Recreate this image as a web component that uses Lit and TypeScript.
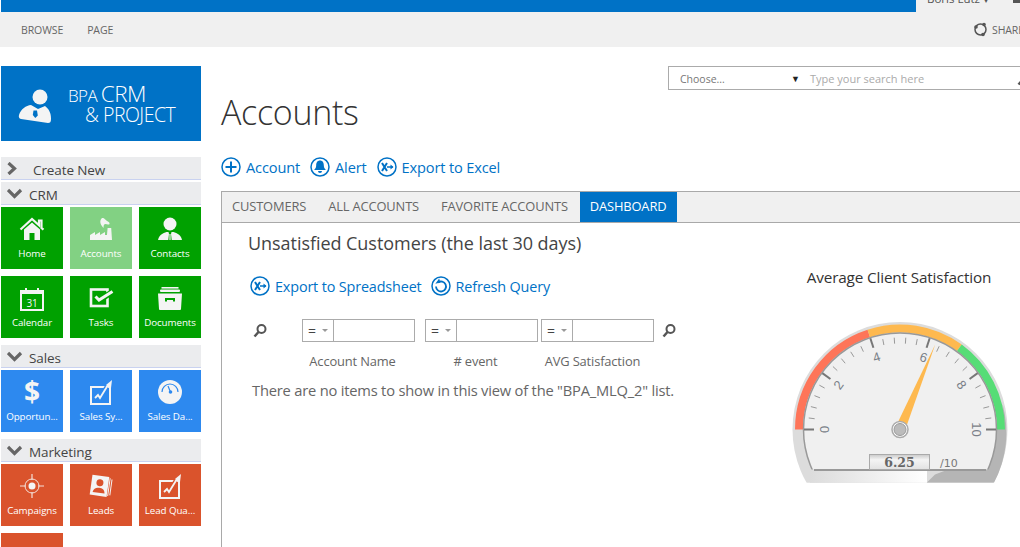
import { LitElement, html, css, svg } from "lit";
import { customElement } from "lit/decorators.js";

const C = (n: number) => {
  const a = Math.PI - (n / 10) * Math.PI;
  return [Math.cos(a), -Math.sin(a)];
};
const CX = 120, CY = 169.5;
const pt = (n: number, r: number) => {
  const [x, y] = C(n);
  return [CX + x * r, CY + y * r];
};
const arc = (a: number, b: number, r: number) => {
  const [x1, y1] = pt(a, r), [x2, y2] = pt(b, r);
  return `M${x1} ${y1}A${r} ${r} 0 0 1 ${x2} ${y2}`;
};

const gauge = () => {
  const ticks: unknown[] = [];
  for (let i = 0; i <= 50; i++) {
    const n = i / 5;
    if (i % 10 === 0) {
      const [a, b] = pt(n, 96), [c, d] = pt(n, 86);
      ticks.push(svg`<line class="major" x1=${a} y1=${b} x2=${c} y2=${d}></line>`);
      const [lx, ly] = pt(n, 76);
      ticks.push(svg`<text class="num" text-anchor="middle" dominant-baseline="central" transform="translate(${lx} ${ly}) rotate(${n * 18 - 90})">${n}</text>`);
    } else if (i % 2 === 0) {
      const [a, b] = pt(n, 92), [c, d] = pt(n, 86);
      ticks.push(svg`<line class="minor" x1=${a} y1=${b} x2=${c} y2=${d}></line>`);
    }
  }
  const [tx, ty] = pt(6.25, 92);
  const dx = tx - CX, dy = ty - CY, len = Math.hypot(dx, dy);
  const px = (-dy / len) * 5, py = (dx / len) * 5;
  return html`<svg class="gauge" width="240" height="230" viewBox="0 0 240 230">
    <defs>
      <clipPath id="body"><rect x="0" y="0" width="240" height="222.7"></rect></clipPath>
      <clipPath id="dial"><rect x="0" y="0" width="240" height="209.5"></rect></clipPath>
      <linearGradient id="strip" x1="0" x2="1" y1="0" y2="0">
        <stop offset="0" stop-color="#dcdcdc"></stop><stop offset="1" stop-color="#ffffff"></stop>
      </linearGradient>
      <linearGradient id="box" x1="0" x2="0" y1="0" y2="1">
        <stop offset="0" stop-color="#c9c9c9"></stop><stop offset=".35" stop-color="#f4f4f4"></stop><stop offset="1" stop-color="#e2e2e2"></stop>
      </linearGradient>
    </defs>
    <g clip-path="url(#body)">
      <circle cx=${CX} cy=${CY} r="107.5" fill="#dcdcdc"></circle>
      <rect x="30" y="205" width="117" height="20" fill="url(#strip)"></rect>
      <path d="M222.7 144.5A107.5 107.5 0 0 1 214 222.7H146.7L155 214.5 L180 205 L222 160Z" fill="#b5b5b5"></path>
    </g>
    <path d=${arc(0, 4, 101)} class="band" stroke="#fe7559"></path>
    <path d=${arc(4, 7, 101)} class="band" stroke="#feb94f"></path>
    <path d=${arc(7, 10, 101)} class="band" stroke="#56dd76"></path>
    <g clip-path="url(#dial)">
      <circle cx=${CX} cy=${CY} r="96.5" fill="#f0f0f0" stroke="#999" stroke-width="1.5"></circle>
    </g>
    <line x1="34" y1="210" x2="206" y2="210" stroke="#999" stroke-width="2"></line>
    ${ticks}
    <polygon points="${tx},${ty} ${CX + px},${CY + py} ${CX - px},${CY - py}" fill="#feb94f"></polygon>
    <circle cx=${CX} cy=${CY} r="8" fill="#fff" stroke="#aaa" stroke-width="1.5"></circle>
    <circle cx=${CX} cy=${CY} r="6" fill="#bbb" stroke="#999"></circle>
    <rect x="89.5" y="194.5" width="60" height="15" fill="url(#box)" stroke="#aaa"></rect>
    <text class="val" x="119.5" y="207" text-anchor="middle">6.25</text>
    <text class="den" x="160" y="207">/10</text>
  </svg>`;
};

const I = (body: unknown) => html`<svg class="ti" width="30" height="30" viewBox="0 0 30 30">${body}</svg>`;

const icons: Record<string, (bg: string) => unknown> = {
  home: () => I(svg`<path d="M7 15.500 15 8.500l8 7V26h-5.500v-7h-5v7H7Z" fill="#f4f4f4"></path><path d="M3.500 15.500 15 5l7 6.300V6.500h2.500V14l2 1.700" fill="none" stroke="#f4f4f4" stroke-width="2.200"></path>`),
  factory: () => I(svg`<path d="M4 26v-5l5-3v3l5-3v3l5-3v3h2l.6-7h3.600l.8 12Z" fill="#f4f4f4"></path><path d="M17.500 14C14 10 13.500 7 15.500 4.500 18 3 19 6 21 7c3 1 3.500 4 1 3.500-3-1-4.500-1-4.500 3.500Z" fill="#f4f4f4"></path>`),
  person: (bg) => I(svg`<circle cx="15" cy="10" r="6.500" fill="#f4f4f4"></circle><path d="M3 26c1-5 5-7 8.500-8h7c3.500 1 7.500 3 8.500 8Z" fill="#f4f4f4"></path><path d="M13.500 18h3l-.5 2 .7 6h-3.400l.7-6Z" fill=${bg}></path><rect x="14.400" y="20" width="1.200" height="6" fill="#f4f4f4"></rect>`),
  cal: () => I(svg`<rect x="4" y="8" width="22" height="19" fill="none" stroke="#f4f4f4" stroke-width="2"></rect><rect x="4" y="8" width="22" height="3" fill="#f4f4f4"></rect><rect x="8" y="5" width="2" height="6" fill="#f4f4f4"></rect><rect x="20" y="5" width="2" height="6" fill="#f4f4f4"></rect><text x="15" y="24" text-anchor="middle" class="cal">31</text>`),
  tasks: (bg) => I(svg`<rect x="5" y="6.500" width="16.500" height="16.500" fill="none" stroke="#f4f4f4" stroke-width="2.600"></rect><path d="M9 13l4 4L26.500 9" fill="none" stroke=${bg} stroke-width="6"></path><path d="M9.500 13.500l3.500 3.500L26.500 8.500" fill="none" stroke="#f4f4f4" stroke-width="3"></path>`),
  docs: (bg) => I(svg`<rect x="6.500" y="4" width="17" height="1.600" fill="#f4f4f4"></rect><rect x="5" y="6.500" width="20" height="2.500" rx="1" fill="#f4f4f4"></rect><path d="M3 10.500h24l-1 15.500a1 1 0 0 1-1 1H5a1 1 0 0 1-1-1Z" fill="#f4f4f4"></path><path d="M10 18.500v-3.500h10v3.500h-2v-1.500h-6v1.500Z" fill=${bg}></path>`),
  dollar: () => I(svg`<text x="15" y="25" text-anchor="middle" class="dollar">$</text>`),
  chart: (bg) => I(svg`<rect x="5" y="10" width="19" height="17" fill="none" stroke="#f4f4f4" stroke-width="2"></rect><path d="M9 21l3-3 2 3 7-11" fill="none" stroke=${bg} stroke-width="5"></path><path d="M9 21l3-3 2 3 8-13" fill="none" stroke="#f4f4f4" stroke-width="1.800"></path><path d="M26 3l-1 8-5-3Z" fill="#f4f4f4"></path>`),
  dial: (bg) => I(svg`<circle cx="15" cy="15" r="12" fill="#f4f4f4"></circle><path d="M7 15a8 8 0 0 1 16 0" fill="none" stroke=${bg} stroke-width="1.200"></path><path d="M13 9l2.500 6" stroke=${bg} stroke-width="1.200"></path><circle cx="15.500" cy="15" r="1.800" fill=${bg}></circle>`),
  target: () => I(svg`<circle cx="15" cy="15" r="7" fill="none" stroke="#f4e0d8" stroke-width="1"></circle><circle cx="15" cy="15" r="3.500" fill="#f4f4f4"></circle><path d="M15 3v6M15 21v6M3 15h6M21 15h6" stroke="#f4e0d8" stroke-width="1.200"></path>`),
  leads: (bg) => I(svg`<g transform="rotate(8 15 15)"><rect x="22.500" y="6" width="1" height="18" fill="#f4f4f4"></rect><rect x="24.500" y="7" width="1" height="16" fill="#f4f4f4"></rect><rect x="5" y="5" width="17" height="20" fill="#f4f4f4"></rect><circle cx="13.500" cy="12" r="3.500" fill=${bg}></circle><path d="M7.500 22c.5-4 3-5 6-5s5.500 1 6 5Z" fill=${bg}></path></g>`),
  ring: () => I(svg`<circle cx="15" cy="21" r="10" fill="none" stroke="#f4f4f4" stroke-width="2"></circle>`),
};

const act = {
  plus: svg`<path d="M10 4.500v11M4.500 10h11" stroke="#0072c6" stroke-width="2"></path>`,
  bell: svg`<path d="M10 3.500c2.800 0 3.800 2.300 3.800 4.800 0 2.500 1.200 3.600 2 4.700H4.200c.8-1.100 2-2.200 2-4.700 0-2.500 1-4.800 3.800-4.800Z M8 14h4a2 2 0 0 1-4 0Z" fill="#0072c6"></path>`,
  excel: svg`<path d="M5 6l5 8M10 6l-5 8" stroke="#0072c6" stroke-width="2"></path><path d="M10 10h6" stroke="#0072c6" stroke-width="1.500"></path><path d="M13.500 7.500l3 2.500-3 2.500" fill="#0072c6"></path>`,
  refresh: svg`<path d="M7 6.500a5 5 0 1 1-2 4" fill="none" stroke="#0072c6" stroke-width="1.800"></path><path d="M4 7h5V3Z" fill="#0072c6" transform="rotate(-15 7 6)"></path>`,
};
const actIcon = (g: unknown) => html`<svg width="20" height="20" viewBox="0 0 20 20"><circle cx="10" cy="10" r="9" fill="none" stroke="#0072c6" stroke-width="1.500"></circle>${g}</svg>`;
const mag = html`<svg class="mg" width="16" height="16" viewBox="0 0 16 16"><circle cx="9.500" cy="6" r="4" fill="none" stroke="#555" stroke-width="2"></circle><path d="M6.500 9 2.500 13.500" stroke="#555" stroke-width="2.500"></path></svg>`;

type Tile = [string, string, boolean?];
const groups: { name: string; color: string; tiles: Tile[] }[] = [
  { name: "CRM", color: "#00a100", tiles: [["Home", "home"], ["Accounts", "factory", true], ["Contacts", "person"], ["Calendar", "cal"], ["Tasks", "tasks"], ["Documents", "docs"]] },
  { name: "Sales", color: "#2d89ef", tiles: [["Opportun...", "dollar"], ["Sales Sy...", "chart"], ["Sales Da...", "dial"]] },
  { name: "Marketing", color: "#da532c", tiles: [["Campaigns", "target"], ["Leads", "leads"], ["Lead Qua...", "chart"], ["", "ring"]] },
];

@customElement("app-root")
export class AppRoot extends LitElement {
  static styles = css`
    :host { display: block; width: 1020px; height: 547px; overflow: hidden; background: #fff; font-family: "Open Sans", "Noto Sans", sans-serif; color: #444; }
    .suite { display: flex; height: 12px; background: #0072c6; overflow: hidden; margin-left: 1px; }
    .me { margin-left: auto; width: 104px; background: #f0f0f0; font-size: 11.500px; line-height: 12px; color: #555; display: flex; padding-left: 11px; box-sizing: border-box; }
    .me span { margin-top: -7px; white-space: nowrap; }
    .me i { width: 7px; height: 3px; background: #555; margin-left: 24px; flex: none; }
    .ribbon { height: 35px; background: #f0f0f0; display: flex; align-items: center; font-size: 10.500px; color: #666; padding: 0 0 0 21px; gap: 24px; white-space: nowrap; overflow: hidden; letter-spacing: -0.1px; }
    .ribbon .share { margin-left: auto; display: flex; align-items: center; gap: 4px; width: 47px; flex: none; }
    .ribbon .share svg { flex: none; }
    .layout { display: flex; padding-top: 19px; }
    .side { width: 200px; margin-left: 1px; flex: none; }
    .logo { height: 75px; background: #0072c6; color: #fff; display: flex; align-items: center; padding-left: 17px; gap: 16px; margin-bottom: 16px; box-sizing: border-box; }
    .logo svg { flex: none; margin-top: 5px; }
    .logo .t { font-weight: 300; white-space: nowrap; padding-bottom: 0; }
    .logo .a { font-size: 17px; letter-spacing: -0.6px; line-height: 20px; margin-top: 1px; }
    .logo .a b { font-weight: 300; font-size: 22.500px; }
    .logo .b { font-size: 19.500px; padding-left: 17px; letter-spacing: -0.5px; line-height: 18px; }
    .hd { height: 23px; background: #ebecee; border-bottom: 1px solid #c9d2f0; box-sizing: border-box; display: flex; align-items: center; padding-left: 6px; font-size: 13.500px; color: #444; letter-spacing: -0.1px; gap: 6px; margin-bottom: 2px; }
    .hd span { padding-top: 3px; }
    .hd.new { gap: 10px; }
    .tiles { display: grid; grid-template-columns: repeat(3, 62px); gap: 7px; margin-bottom: 7px; }
    .tile { height: 62px; color: #fff; font-size: 9.800px; font-weight: 500; display: flex; flex-direction: column; align-items: center; padding-top: 7px; box-sizing: border-box; white-space: nowrap; letter-spacing: -0.1px; }
    .tile .lb { margin-top: 3px; line-height: 14px; }
    .ti { display: block; flex: none; }
    .cal { font: 10px "Open Sans", sans-serif; fill: #f4f4f4; }
    .dollar { font: 700 28px "Open Sans", sans-serif; fill: #f4f4f4; }
    .main { flex: 1; min-width: 0; padding-left: 20px; }
    .search { margin-left: 447px; width: 400px; height: 24px; border: 1px solid #ababab; box-sizing: border-box; display: flex; align-items: center; font-size: 10.500px; padding: 1px 0 0 11px; color: #777; }
    .search .ch { width: 111px; }
    .search .ar { font-size: 9px; color: #222; width: 19px; }
    .search .ph { color: #aaa; font-size: 11px; width: 206px; }
    h1 { margin: 0; font-weight: 300; font-size: 34px; line-height: 44px; color: #333; letter-spacing: -0.3px; }
    .links { display: flex; align-items: center; font-size: 14.600px; color: #0072c6; gap: 5px; height: 24px; white-space: nowrap; letter-spacing: -0.15px; }
    .links.top { margin-top: 21px; }
    .links svg { flex: none; }
    .links .txt { margin-right: 5px; }
    .panel { margin-top: 12px; border-left: 1px solid #a9a9a9; border-top: 1px solid #a9a9a9; height: 380px; }
    .tabs { display: flex; height: 30px; background: #f0f0f0; border-bottom: 1px solid #a9a9a9; font-size: 12.900px; color: #666; letter-spacing: -0.15px; padding-left: 10px; gap: 22px; align-items: center; white-space: nowrap; }
    .tabs span:not(.on) { padding-bottom: 2px; }
    .tabs .on { margin-left: -10px; background: #0072c6; color: #fff; height: 30px; padding: 0 11px 2px 10px; box-sizing: border-box; display: flex; align-items: center; }
    .body { display: flex; }
    .left { width: 459px; padding-left: 26px; box-sizing: border-box; flex: none; }
    h2 { font-weight: 400; font-size: 18px; margin: 8px 0 0 0; line-height: 24px; color: #444; white-space: nowrap; letter-spacing: -0.05px; }
    .left .links { margin-top: 19px; margin-left: 2px; font-size: 14.400px; }
    .left .links .txt { margin-right: 4px; }
    .filter { display: grid; grid-template-columns: 54px 113px 113px 113px 36px; margin-top: 21px; align-items: center; }
    .filter .mg { display: block; }
    .m1 { margin-left: 4px; }
    .m2 { margin-left: 20px; }
    .fb { height: 23px; width: 113px; border: 1px solid #ababab; box-sizing: border-box; display: flex; font-size: 14px; color: #444; background: #fff; }
    .fb .op { width: 30px; border-right: 1px solid #ababab; display: flex; align-items: center; justify-content: center; gap: 6px; }
    .fb .op i { border: 3px solid transparent; border-top: 3px solid #999; margin-top: 3px; }
    .c2 { margin-left: 10px; }
    .c3 { margin-left: 13px; }
    .labels { display: grid; grid-template-columns: 54px 113px 123px 116px; font-size: 12.900px; color: #666; margin-top: 9px; line-height: 20px; letter-spacing: -0.15px; white-space: nowrap; }
    .labels span { text-align: center; padding-right: 12px; }
    .labels .l2 { padding-left: 10px; padding-right: 12px; }
    .labels .l3 { padding-left: 3px; padding-right: 10px; }
    .msg { font-size: 14.700px; color: #666; margin: 9px 0 0 4px; line-height: 20px; white-space: nowrap; letter-spacing: -0.2px; }
    .right { flex: none; width: 240px; margin-left: 99px; }
    .gt { font-size: 15.300px; text-align: center; color: #333; margin-top: 44px; line-height: 20px; padding-right: 2px; white-space: nowrap; letter-spacing: -0.15px; }
    .gauge { display: block; margin-top: -27px; }
    .band { fill: none; stroke-width: 8; }
    .major { stroke: #777; stroke-width: 2; }
    .minor { stroke: #999; stroke-width: 1; }
    .num { font: 13px "Liberation Sans", sans-serif; fill: #7a7f88; }
    .val { font: 700 12.500px "DejaVu Serif", serif; fill: #666; }
    .den { font: 11px "DejaVu Sans", sans-serif; fill: #777; }
  `;

  private tile(t: Tile, color: string) {
    return html`<div class="tile" style="background:${t[2] ? "#82d183" : color}">
      ${icons[t[1]](t[2] ? "#82d183" : color)}<span class="lb">${t[0]}</span>
    </div>`;
  }

  render() {
    const chev = (open: boolean) => html`<svg width="16" height="13" viewBox="0 0 16 13" fill="none" stroke="#666" stroke-width="3.200">
      ${open ? svg`<path d="M1 3 7.500 9.500 14 3"></path>` : svg`<path d="M1.500 1 7.500 6.500 1.500 12"></path>`}</svg>`;
    return html`
      <div class="suite"><div class="me"><span>Boris Lutz ▾</span><i></i></div></div>
      <div class="ribbon">
        <span>BROWSE</span><span>PAGE</span>
        <span class="share">
          <svg width="15" height="15" viewBox="0 0 15 15" fill="none"><circle cx="7.500" cy="7.500" r="5.500" stroke="#555" stroke-width="1.500"></circle><circle cx="3" cy="5" r="1.800" fill="#555"></circle><circle cx="11" cy="2.500" r="1.800" fill="#555"></circle><circle cx="10" cy="12.500" r="1.800" fill="#555"></circle></svg>
          SHARE
        </span>
      </div>
      <div class="layout">
        <aside class="side">
          <div class="logo">
            <svg width="34" height="34" viewBox="0 0 34 34"><circle cx="22" cy="8" r="7.500" fill="#f4f4f4"></circle><path d="M1 26C3 20 8 16.500 13 16l7 4 7-3c4 3 6 7 6 13 0 3-1 4-3 4L3 30c-2-.5-2.500-2-2-4Z" fill="#f4f4f4"></path><path d="M15.500 21.500h3.500l.8 5-2.500 2.500-2.500-3Z" fill="#0072c6"></path></svg>
            <div class="t"><div class="a">BPA <b>CRM</b></div><div class="b">&amp; PROJECT</div></div>
          </div>
          <div class="hd new">${chev(false)}<span>Create New</span></div>
          ${groups.map(g => html`
            <div class="hd">${chev(true)}<span>${g.name}</span></div>
            <div class="tiles">${g.tiles.map(t => this.tile(t, g.color))}</div>`)}
        </aside>
        <main class="main">
          <div class="search"><span class="ch">Choose...</span><span class="ar">▼</span><span class="ph">Type your search here</span>${mag}</div>
          <h1>Accounts</h1>
          <div class="links top">
            ${actIcon(act.plus)}<span class="txt">Account</span>
            ${actIcon(act.bell)}<span class="txt">Alert</span>
            ${actIcon(act.excel)}<span class="txt">Export to Excel</span>
          </div>
          <section class="panel">
            <div class="tabs"><span>CUSTOMERS</span><span>ALL ACCOUNTS</span><span>FAVORITE ACCOUNTS</span><span class="on">DASHBOARD</span></div>
            <div class="body">
              <div class="left">
                <h2>Unsatisfied Customers (the last 30 days)</h2>
                <div class="links">${actIcon(act.excel)}<span class="txt">Export to Spreadsheet</span>${actIcon(act.refresh)}<span class="txt">Refresh Query</span></div>
                <div class="filter">
                  <span class="m1">${mag}</span>
                  <div class="fb"><span class="op">= <i></i></span></div>
                  <div class="fb c2"><span class="op">= <i></i></span></div>
                  <div class="fb c3"><span class="op">= <i></i></span></div>
                  <span class="m2">${mag}</span>
                </div>
                <div class="labels"><i></i><span>Account Name</span><span class="l2"># event</span><span class="l3">AVG Satisfaction</span></div>
                <div class="msg">There are no items to show in this view of the "BPA_MLQ_2" list.</div>
              </div>
              <div class="right">
                <div class="gt">Average Client Satisfaction</div>
                ${gauge()}
              </div>
            </div>
          </section>
        </main>
      </div>
    `;
  }
}
